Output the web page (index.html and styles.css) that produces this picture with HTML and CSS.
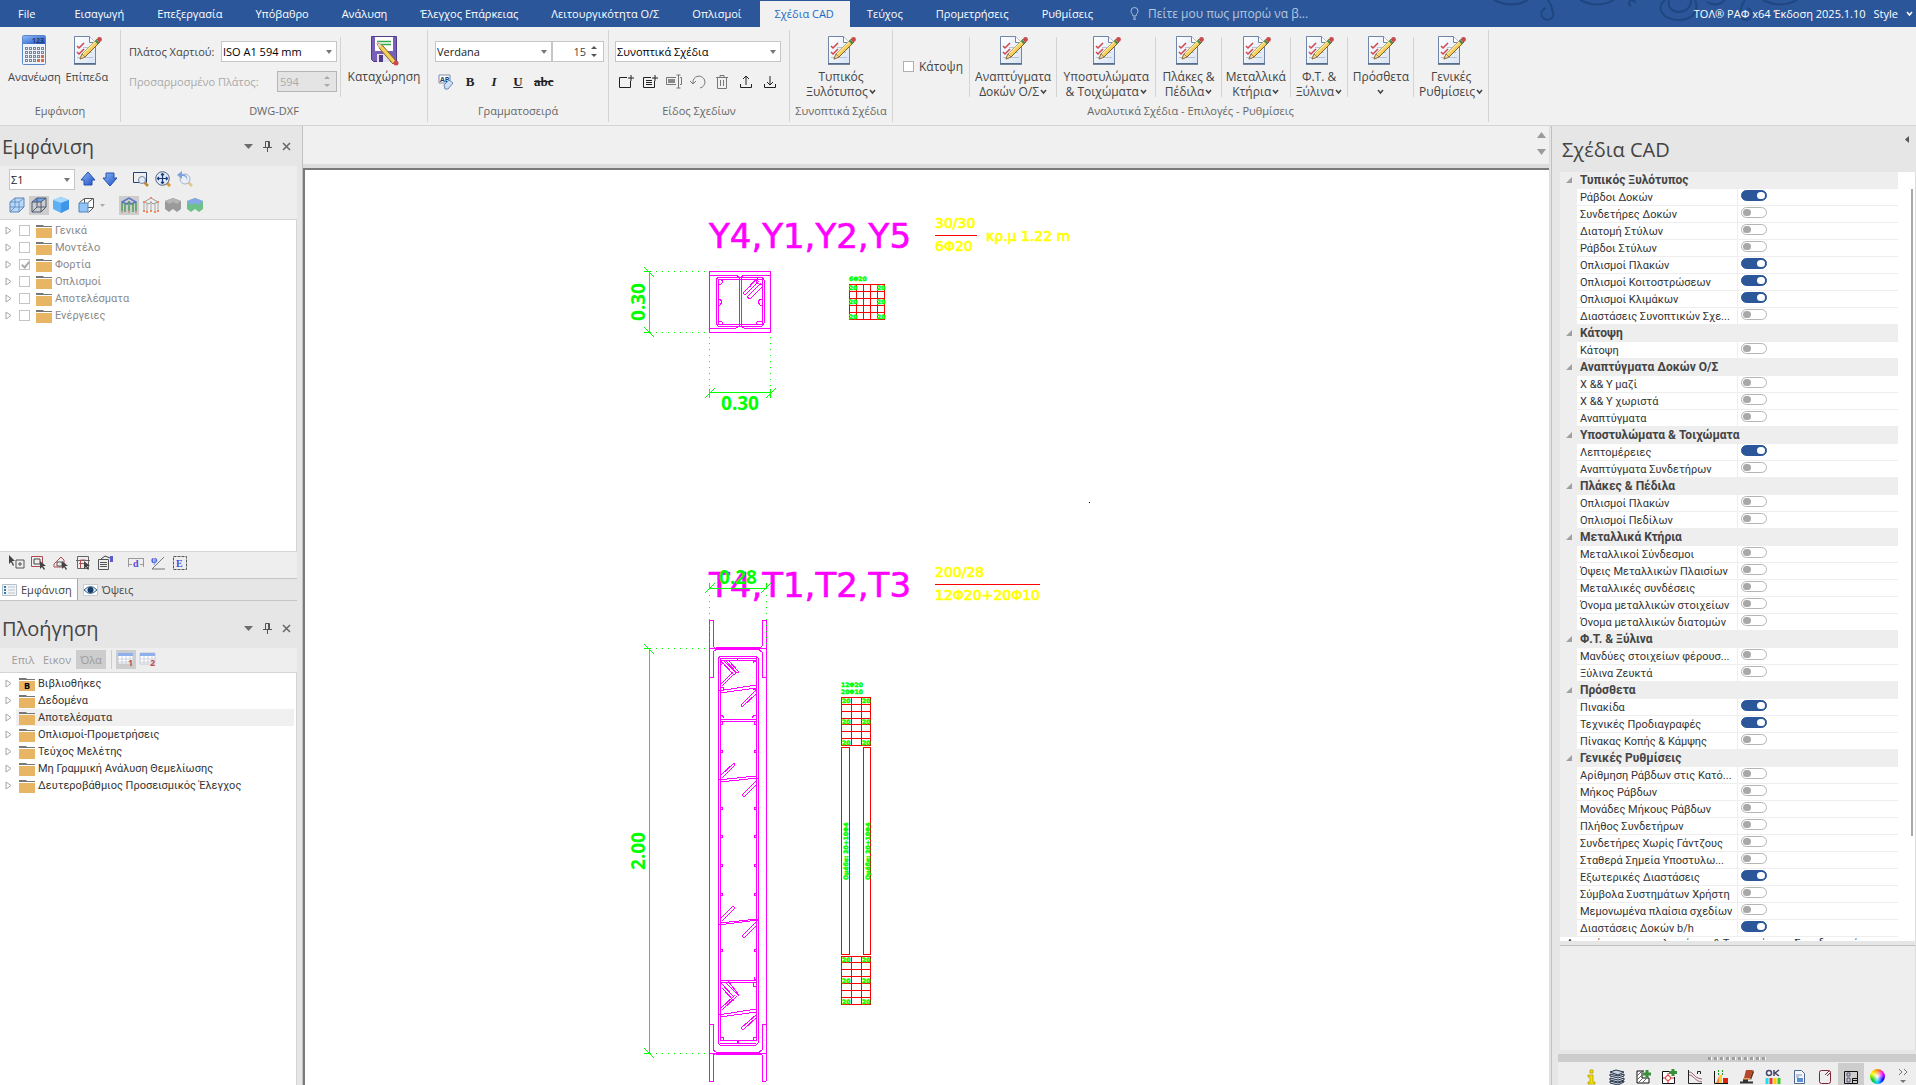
FILE: index.html
```html
<!DOCTYPE html>
<html lang="el">
<head>
<meta charset="utf-8">
<title>Σχέδια CAD</title>
<link rel="stylesheet" href="styles.css">
</head>
<body>
<svg class="defs" aria-hidden="true">
  <defs>
    <linearGradient id="paper" x1="0" y1="0" x2="1" y2="1"><stop offset="0" stop-color="#fff"/><stop offset="1" stop-color="#d9e4f5"/></linearGradient>
    <linearGradient id="blue" x1="0" y1="0" x2="1" y2="1"><stop offset="0" stop-color="#8db9f8"/><stop offset="1" stop-color="#1c4fc4"/></linearGradient>
    <symbol id="i-doc" viewBox="0 0 32 32">
      <path d="M3.500 2.500h15l6 6v21h-21z" fill="url(#paper)" stroke="#6f86a8"/>
      <path d="M3 30h22" stroke="#4d6482" stroke-width="1.500"/>
      <path d="M18.500 2.500v6h6" fill="#fff" stroke="#6f86a8"/>
      <path d="M12 13.500h9M12 18.500h9M6 23.500h16" stroke="#b9c3d2"/>
      <path d="M6 12l2 2 5-5M6 18l2 2 5-5" fill="none" stroke="#d0454b" stroke-width="1.500"/>
      <path d="M9 25l2-5L26 5l3 3-15 15z" fill="#f4cd5b" stroke="#7d6325"/>
      <path d="M12 20L26 6" stroke="#fbe9a6" stroke-width="1.500"/>
      <path d="M9 25l2-5 3 3z" fill="#f6d5ae" stroke="#7d6325" stroke-width=".6"/>
      <path d="M24.500 6.500l3 3" stroke="#3b8a5a" stroke-width="2"/>
      <circle cx="28.500" cy="5.500" r="2.400" fill="#c9494d"/>
    </symbol>
    <symbol id="i-calc" viewBox="0 0 32 32">
      <rect x="4.500" y="1.500" width="23" height="29" rx="1" fill="#eef3fb" stroke="#5c86c8"/>
      <rect x="5" y="2" width="22" height="8" fill="url(#blue)"/>
      <text x="14" y="9" class="calc-digits">123</text>
      <path d="M7 14.500h19M7 18.500h19M7 22.500h19M7 26.500h12" stroke="#7d8796" stroke-width="3" stroke-dasharray="3 1"/>
      <path d="M8 14.500h17M8 18.500h17M8 22.500h17M8 26.500h10" stroke="#e4e9f2" stroke-width="1" stroke-dasharray="1 3"/>
      <path d="M23 22.500h3M19 26.500h7" stroke="#d86c42" stroke-width="3" stroke-dasharray="3 1"/>
    </symbol>
    <symbol id="i-save" viewBox="0 0 32 32">
      <path d="M3.500 2.500h25v25h-23l-2-2z" fill="#7a5fb8" stroke="#513c8c"/>
      <rect x="7" y="3" width="18" height="14" fill="#fff"/>
      <path d="M9 7.500h14M9 10.500h14" stroke="#33a84a" stroke-width="1.500"/>
      <rect x="9" y="20" width="13" height="8" fill="#e4e2ee"/><rect x="11" y="21" width="4" height="7" fill="#513c8c"/>
      <path d="M9 9l6 3 13 15-3 3-13-15z" fill="#f4cd5b" stroke="#7d6325"/>
      <path d="M9 9l5 2-3 3z" fill="#f6d5ae"/>
      <circle cx="28" cy="29" r="2.500" fill="#c9494d"/>
    </symbol>
    <symbol id="i-chev" viewBox="0 0 7 6"><path d="M1 1l2.500 3L6 1" fill="none" stroke="currentColor" stroke-width="1.500"/></symbol>
    <symbol id="i-folder" viewBox="0 0 17 14"><path d="M0 1h7l1 1h8v1H0z" fill="#777"/><path d="M0 4h16v10H0z" fill="#e8b565"/></symbol>
    <symbol id="i-exp" viewBox="0 0 7 9"><path d="M1 1l5 3.500L1 8z" fill="#fff" stroke="#a6a6a6"/></symbol>
    <symbol id="i-tri" viewBox="0 0 9 5"><path d="M0 0h9L4.500 5z" fill="#6d6d6d"/></symbol>
    <symbol id="i-pin" viewBox="0 0 9 11"><path d="M2.500 6V.5h4V6M0 6.500h9M4.500 7v4M5.500 1v5" fill="none" stroke="#555"/></symbol>
    <symbol id="i-close" viewBox="0 0 9 9"><path d="M1 1l7 7M8 1L1 8" stroke="#666" stroke-width="1.500"/></symbol>
    <symbol id="i-up" viewBox="0 0 16 16"><path d="M8 1l7 8h-3v5H4V9H1z" fill="url(#blue)" stroke="#2450b0"/></symbol>
    <symbol id="i-down" viewBox="0 0 16 16"><path d="M8 15L1 7h3V2h8v5h3z" fill="url(#blue)" stroke="#2450b0"/></symbol>
    <symbol id="i-zoomwin" viewBox="0 0 16 16"><path d="M.5 1.500h13v10H.5z" fill="none" stroke="#25416f"/><path d="M11 11l4 4" stroke="#c58a2c" stroke-width="2.500"/><circle cx="9" cy="9" r="3.500" fill="#e2ecf8" stroke="#75879f"/></symbol>
    <symbol id="i-zoomall" viewBox="0 0 16 16"><path d="M12 12l3 3" stroke="#e09a2c" stroke-width="3"/><circle cx="7.500" cy="7.500" r="6.800" fill="#dce8f8" stroke="#56637a"/><path d="M7.500 2.500v10M2.500 7.500h10M6 4l1.500-1.500L9 4M6 11l1.500 1.500L9 11M4 6L2.500 7.500 4 9M11 6l1.500 1.500L11 9" fill="none" stroke="#1d3a78" stroke-width="1.200"/></symbol>
    <symbol id="i-zoomprev" viewBox="0 0 16 16"><path d="M11 11l4 4" stroke="#e6c48c" stroke-width="2.500"/><circle cx="8" cy="8" r="5" fill="#e8eff8" stroke="#a7b4c6"/><path d="M10 10c0-4-2-5-5-5v3L0 4l5-4v3c4 0 6 3 5 7z" fill="#7fa2dc"/></symbol>
    <symbol id="i-cube" viewBox="0 0 16 16"><path d="M1 5l5-4h9v9l-5 5H1z" fill="#b8d8fa" stroke="#5c85b8"/><path d="M1 5h9v10M10 5l5-4M6 1v9H1M6 10l-5 5M6 10h9" fill="none" stroke="#5c85b8" stroke-width=".8"/></symbol>
    <symbol id="i-cubewire" viewBox="0 0 16 16"><path d="M1 5l5-4h9l-5 4z" fill="#6f9fe8"/><path d="M1 5l5-4h9v9l-5 5H1zM1 5h9v10M10 5l5-4M6 1v9M6 10l-5 5M6 10h9" fill="none" stroke="#4c5a70"/></symbol>
    <symbol id="i-cubesolid" viewBox="0 0 16 16"><path d="M0 3l8-3 8 3v9l-8 4-8-4z" fill="#5db0f5"/><path d="M0 3l8-3 8 3-8 3z" fill="#a4d8ff"/><path d="M8 6l8-3v9l-8 4z" fill="#3f96e8"/></symbol>
    <symbol id="i-cubefront" viewBox="0 0 16 16"><path d="M1.500 5.500l5-4h9v9l-5 5" fill="#fff" stroke="#555"/><path d="M10 5.500l5-4M6.500 2v4M10 10.500h5" stroke="#555"/><path d="M1 6h9v9H1z" fill="#93c4f5" stroke="#4f84bf"/></symbol>
    <symbol id="i-frame" viewBox="0 0 16 16"><path d="M1 5l7-4 7 4-5 2-2-2-2 2z" fill="none" stroke="#5d74c4" stroke-width="1.500"/><path d="M1 6v8M4 6v9M8 4v10M12 6v9M15 6v8" stroke="#4f9e5c" stroke-width="1.500"/><path d="M0 15h2M7 15h2M14 15h2" stroke="#d8745c"/></symbol>
    <symbol id="i-frame2" viewBox="0 0 16 16"><path d="M1 5l7-4 7 4-5 2-2-2-2 2z" fill="none" stroke="#999"/><path d="M1 6v8M4 6v9M8 4v10M12 6v9M15 6v8" stroke="#a8a8a8"/><path d="M0 14h2M3 15h2M7 14h2M11 15h2M14 14h2M0 5h2M14 5h2M7 1h2" stroke="#f08a60" stroke-width="2"/></symbol>
    <symbol id="i-solid" viewBox="0 0 16 16"><path d="M0 4l8-3 8 3v8l-4 3-4-3-4 3-4-3z" fill="#9a9a9a"/><path d="M0 4l8-3 8 3-4 3-4-2-4 2z" fill="#b4b4b4"/></symbol>
    <symbol id="i-solid2" viewBox="0 0 16 16"><path d="M0 4l8-3 8 3v8l-4 3-4-3-4 3-4-3z" fill="#6cc088"/><path d="M0 4l8-3 8 3-4 4-4-2-4 2z" fill="#86a8ea"/></symbol>
    <symbol id="i-table" viewBox="0 0 18 16"><path d="M1 1h15v11H1z" fill="#fff" stroke="#c5c9d4"/><path d="M1 1h15v3H1z" fill="#8fb0ec"/><path d="M1 7h15M1 10h15M5 4v8M9 4v8M13 4v8" stroke="#cdd2e0"/></symbol>
  </defs>
</svg>

<div class="app">
<header class="topbar">
  <nav class="tabs">
    <a href="#" class="file">File</a><a href="#">Εισαγωγή</a><a href="#">Επεξεργασία</a><a href="#">Υπόβαθρο</a><a href="#">Ανάλυση</a><a href="#">Έλεγχος Επάρκειας</a><a href="#">Λειτουργικότητα Ο/Σ</a><a href="#">Οπλισμοί</a><a href="#" class="active" aria-current="page">Σχέδια CAD</a><a href="#">Τεύχος</a><a href="#">Προμετρήσεις</a><a href="#">Ρυθμίσεις</a>
  </nav>
  <label class="tellme"><svg width="9" height="13" viewBox="0 0 9 13"><path d="M3 9C3 7 1 6.500 1 4a3.500 3.500 0 0 1 7 0c0 2.500-2 3-2 5zM3 11h3M3.500 12.500h2" fill="none" stroke="#aebfdc"/></svg><input type="text" placeholder="Πείτε μου πως μπορώ να β..." aria-label="Αναζήτηση"></label>
  <svg class="swirls" width="320" height="27" viewBox="1480 0 320 27" fill="none" stroke="#1f4680" stroke-width="2">
    <path d="M1491 0q18 9 34 0M1545 0q4 6 4 10a6 6 0 1 1-6-2M1577 0q18 9 34 0M1628 6a3 3 0 1 1 4-3M1662 0c-10 8-2 20 14 20s20-12 16-20M1666 0c-2 8 4 12 10 12s12-4 12-12M1742 0q-4 6-4 10a6 6 0 1 0 6-2M1760 0q18 9 34 0M1722 0q-8 8-18 2"/>
  </svg>
  <span class="version">ΤΟΛ® ΡΑΦ x64 Έκδοση 2025.1.10</span>
  <button class="style-btn">Style <svg width="7" height="6"><use href="#i-chev"/></svg></button>
</header>

<section class="ribbon">
  <div class="group g-view">
    <div class="tools">
      <button class="big"><svg><use href="#i-calc"/></svg>Ανανέωση</button>
      <button class="big"><svg><use href="#i-doc"/></svg>Επίπεδα</button>
    </div>
    <h2>Εμφάνιση</h2>
  </div>
  <div class="group g-dxf">
    <div class="tools">
      <div class="stack paper">
        <div class="line"><label for="paper-w">Πλάτος Χαρτιού:</label><span class="combo"><select id="paper-w"><option>ISO A1 594 mm</option></select></span></div>
        <div class="line off"><label for="fit-w">Προσαρμοσμένο Πλάτος:</label><span class="spin"><input id="fit-w" type="text" value="594" disabled></span></div>
      </div>
      <i class="sep"></i>
      <button class="big"><svg><use href="#i-save"/></svg>Καταχώρηση</button>
    </div>
    <h2>DWG-DXF</h2>
  </div>
  <div class="group g-font">
    <div class="tools">
      <div class="stack">
        <div class="line joined"><span class="combo"><select aria-label="Γραμματοσειρά"><option>Verdana</option></select></span><span class="spin num"><input type="text" value="15" aria-label="Μέγεθος"></span></div>
        <div class="line fmt">
          <button aria-label="Καθαρισμός"><svg width="16" height="16" viewBox="0 0 16 16"><path d="M1 1h11v8H1z" fill="#fff" stroke="#7d8ba5"/><text x="2" y="8" class="clear-text">AB</text><path d="M6 11l5-5 4 3-5 6H7z" fill="#cfe0f6" stroke="#6d87b4"/></svg></button>
          <button class="b">B</button><button class="i">I</button><button class="u">U</button><button class="s">abc</button>
        </div>
      </div>
    </div>
    <h2>Γραμματοσειρά</h2>
  </div>
  <div class="group g-kind">
    <div class="tools">
      <div class="stack">
        <div class="line"><span class="combo"><select aria-label="Είδος Σχεδίων"><option>Συνοπτικά Σχέδια</option></select></span></div>
        <div class="line kinds">
          <button aria-label="Νέο"><svg width="16" height="16" viewBox="0 0 16 16"><path d="M9 3.500H1.500v10h11V7M13 1v6M10 4h6" fill="none" stroke="#222"/></svg></button>
          <button aria-label="Αντιγραφή"><svg width="16" height="16" viewBox="0 0 16 16"><path d="M9 3.500H1.500v10h11V7M13 1v6M10 4h6M4 6.500h6M4 8.500h6M4 10.500h6" fill="none" stroke="#222"/></svg></button>
          <button aria-label="Μετονομασία"><svg width="16" height="16" viewBox="0 0 16 16"><path d="M10 3.500H.5v7H10M12.500 1v13M10.500 1h4M10.500 14h4M14 3.500h1.500v7H14" fill="none" stroke="#777"/><path d="M2 5h7v4H2z" fill="#888"/></svg></button>
          <button aria-label="Αναίρεση"><svg width="16" height="16" viewBox="0 0 16 16"><path d="M3 9a6 6 0 1 1 7 5M0 7l3 3 3-3" fill="none" stroke="#777"/></svg></button>
          <button aria-label="Διαγραφή"><svg width="16" height="16" viewBox="0 0 16 16"><path d="M2 3.500h12M6 3V1.500h4V3M3.500 4v10.500h9V4M6.500 6v6M9.500 6v6" fill="none" stroke="#777"/></svg></button>
          <button aria-label="Εξαγωγή"><svg width="16" height="16" viewBox="0 0 16 16"><path d="M2.500 10v3.500h11V10M8 11V2M5 5l3-3 3 3" fill="none" stroke="#222"/></svg></button>
          <button aria-label="Εισαγωγή"><svg width="16" height="16" viewBox="0 0 16 16"><path d="M2.500 10v3.500h11V10M8 2v9M5 8l3 3 3-3" fill="none" stroke="#222"/></svg></button>
        </div>
      </div>
    </div>
    <h2>Είδος Σχεδίων</h2>
  </div>
  <div class="group g-typ">
    <div class="tools"><button class="big"><svg><use href="#i-doc"/></svg>Τυπικός<span>Ξυλότυπος<svg class="chev"><use href="#i-chev"/></svg></span></button></div>
    <h2>Συνοπτικά Σχέδια</h2>
  </div>
  <div class="group g-ana">
    <div class="tools">
      <label class="plan"><input type="checkbox">Κάτοψη</label>
      <i class="sep"></i><button class="big w1"><svg><use href="#i-doc"/></svg>Αναπτύγματα<span>Δοκών Ο/Σ <svg class="chev"><use href="#i-chev"/></svg></span></button>
      <i class="sep"></i><button class="big w2"><svg><use href="#i-doc"/></svg>Υποστυλώματα<span>&amp; Τοιχώματα<svg class="chev"><use href="#i-chev"/></svg></span></button>
      <i class="sep"></i><button class="big w3"><svg><use href="#i-doc"/></svg>Πλάκες &amp;<span>Πέδιλα<svg class="chev"><use href="#i-chev"/></svg></span></button>
      <i class="sep"></i><button class="big w6"><svg><use href="#i-doc"/></svg>Μεταλλικά<span>Κτήρια<svg class="chev"><use href="#i-chev"/></svg></span></button>
      <i class="sep"></i><button class="big w4"><svg><use href="#i-doc"/></svg>Φ.Τ. &amp;<span>Ξύλινα<svg class="chev"><use href="#i-chev"/></svg></span></button>
      <i class="sep"></i><button class="big w3"><svg><use href="#i-doc"/></svg>Πρόσθετα<span><svg class="chev"><use href="#i-chev"/></svg></span></button>
      <i class="sep"></i><button class="big w5"><svg><use href="#i-doc"/></svg>Γενικές<span>Ρυθμίσεις<svg class="chev"><use href="#i-chev"/></svg></span></button>
    </div>
    <h2>Αναλυτικά Σχέδια - Επιλογές - Ρυθμίσεις</h2>
  </div>
</section>

<div class="work">
<aside class="left">
  <section class="pane view-pane">
    <header class="pane-head"><h1>Εμφάνιση</h1><button aria-label="Μενού"><svg width="9" height="5"><use href="#i-tri"/></svg></button><button aria-label="Καρφίτσωμα"><svg width="9" height="11"><use href="#i-pin"/></svg></button><button aria-label="Κλείσιμο"><svg width="9" height="9"><use href="#i-close"/></svg></button></header>
    <div class="bars">
      <div class="bar">
        <span class="combo level"><select aria-label="Στάθμη"><option>Σ1</option></select></span>
        <button aria-label="Πάνω"><svg><use href="#i-up"/></svg></button><button aria-label="Κάτω"><svg><use href="#i-down"/></svg></button><i class="gap"></i><button aria-label="Εστίαση παραθύρου"><svg><use href="#i-zoomwin"/></svg></button><button aria-label="Εστίαση όλων"><svg><use href="#i-zoomall"/></svg></button><button aria-label="Προηγούμενη εστίαση"><svg><use href="#i-zoomprev"/></svg></button>
      </div>
      <div class="bar">
        <button aria-label="Κύβος"><svg><use href="#i-cube"/></svg></button><button class="on" aria-label="Πλέγμα"><svg><use href="#i-cubewire"/></svg></button><button aria-label="Στερεό"><svg><use href="#i-cubesolid"/></svg></button><i class="gap s"></i><button aria-label="Όψη"><svg><use href="#i-cubefront"/></svg></button><button class="drop" aria-label="Περισσότερα"><svg class="mini"><use href="#i-tri"/></svg></button><i class="gap m"></i><button class="on" aria-label="Φορέας"><svg><use href="#i-frame"/></svg></button><button aria-label="Κόμβοι"><svg><use href="#i-frame2"/></svg></button><button aria-label="Γκρι"><svg><use href="#i-solid"/></svg></button><button aria-label="Χρώμα"><svg><use href="#i-solid2"/></svg></button>
      </div>
    </div>
    <ul class="tree checks">
      <li><svg class="exp"><use href="#i-exp"/></svg><label><input type="checkbox"><svg class="fold"><use href="#i-folder"/></svg>Γενικά</label></li>
      <li><svg class="exp"><use href="#i-exp"/></svg><label><input type="checkbox"><svg class="fold"><use href="#i-folder"/></svg>Μοντέλο</label></li>
      <li><svg class="exp"><use href="#i-exp"/></svg><label><input type="checkbox" checked><svg class="fold"><use href="#i-folder"/></svg>Φορτία</label></li>
      <li><svg class="exp"><use href="#i-exp"/></svg><label><input type="checkbox"><svg class="fold"><use href="#i-folder"/></svg>Οπλισμοί</label></li>
      <li><svg class="exp"><use href="#i-exp"/></svg><label><input type="checkbox"><svg class="fold"><use href="#i-folder"/></svg>Αποτελέσματα</label></li>
      <li><svg class="exp"><use href="#i-exp"/></svg><label><input type="checkbox"><svg class="fold"><use href="#i-folder"/></svg>Ενέργειες</label></li>
    </ul>
    <div class="bar foot">
      <button aria-label="Επιλογή"><svg viewBox="0 0 16 16"><path d="M0 0v9l2-2 2 4 1-1-2-4h3z" fill="#444"/><path d="M7 5h8v8H7zM11 7v4M9 9h4" fill="none" stroke="#555"/></svg></button>
      <button aria-label="Παράθυρο"><svg viewBox="0 0 16 16"><path d="M.5 1.500h11v10H.5z" fill="none" stroke="#b04a50"/><path d="M3 4h6v5H3z" fill="none" stroke="#444"/><path d="M9 6v8l2-2 2 3 1-1-2-3h3z" fill="#444"/></svg></button>
      <button aria-label="Πολύγωνο"><svg viewBox="0 0 16 16"><path d="M1 12V9l7-7 3 3v7z" fill="none" stroke="#b04a50"/><path d="M4 7h5v4H4z" fill="none" stroke="#555"/><path d="M9 6v8l2-2 2 3 1-1-2-3h3z" fill="#444"/></svg></button>
      <button aria-label="Τομή"><svg viewBox="0 0 16 16"><path d="M2.500 1.500h11v12h-11zM1 5.500h14" fill="none" stroke="#666"/><path d="M5.500 13V5h5M4 8.500h5" fill="none" stroke="#b04a50"/><path d="M9 6v8l2-2 2 3 1-1-2-3h3z" fill="#444"/></svg></button>
      <button aria-label="Ιδιότητες"><svg viewBox="0 0 16 16"><path d="M1.500 4.500h10v10h-10zM3 7.500h7M3 9.500h7M3 11.500h7" fill="none" stroke="#555"/><path d="M4 4l4-3 5 2" fill="none" stroke="#444"/><path d="M13 1h3v6h-3z" fill="#5c5cc8"/></svg></button>
      <i class="gap"></i>
      <button aria-label="Απόσταση"><svg viewBox="0 0 16 16"><path d="M.5 3v9M15.500 3v9M1 3.500h14M1 9.500h3M12 9.500h3" stroke="#999"/><text x="5" y="12" class="ico-t">d</text></svg></button>
      <button aria-label="Γωνία"><svg viewBox="0 0 16 16"><path d="M2 14L14 2M2 14h13" stroke="#777"/><text x="1" y="8" class="ico-t">φ</text></svg></button>
      <button aria-label="Εμβαδόν"><svg viewBox="0 0 16 16"><path d="M1.500 1.500h13v13h-13z" fill="none" stroke="#555" stroke-dasharray="3 1"/><text x="4" y="12" class="ico-t">E</text></svg></button>
    </div>
    <div class="pane-tabs" role="tablist">
      <button role="tab" aria-selected="true" class="sel"><svg width="15" height="12" viewBox="0 0 15 12"><path d="M.5.5h14v11H.5z" fill="#f3f6f9" stroke="#b7bfc8"/><path d="M2 3h2M2 6h2M2 9h2" stroke="#2f7bb0" stroke-width="2"/><path d="M6 3h7M6 6h7M6 9h7" stroke="#b9c2cb"/></svg>Εμφάνιση</button>
      <button role="tab" aria-selected="false"><svg width="15" height="12" viewBox="0 0 15 12"><path d="M.5.5h14v11H.5z" fill="#fff" stroke="#c6ccd3"/><path d="M1 6q6.500-7 13 0-6.500 7-13 0z" fill="#dceaf6" stroke="#3a5d7d"/><circle cx="7.500" cy="6" r="3" fill="#123c6b"/></svg>Όψεις</button>
    </div>
  </section>
  <section class="pane nav-pane">
    <header class="pane-head"><h1>Πλοήγηση</h1><button aria-label="Μενού"><svg width="9" height="5"><use href="#i-tri"/></svg></button><button aria-label="Καρφίτσωμα"><svg width="9" height="11"><use href="#i-pin"/></svg></button><button aria-label="Κλείσιμο"><svg width="9" height="9"><use href="#i-close"/></svg></button></header>
    <div class="bar nav-bar"><button>Επιλ</button><button>Εικον</button><button class="on">Όλα</button><i class="vsep"></i><button class="on tbl" aria-label="Πίνακας 1"><svg viewBox="0 0 18 16"><use href="#i-table"/><text x="11" y="14" class="num-t">1</text></svg></button><button class="tbl" aria-label="Πίνακας 2"><svg viewBox="0 0 18 16"><use href="#i-table"/><text x="11" y="14" class="num-t">2</text></svg></button></div>
    <ul class="tree">
      <li><svg class="exp"><use href="#i-exp"/></svg><a href="#"><svg class="fold" viewBox="0 0 17 14"><use href="#i-folder" width="17" height="14"/><text x="5" y="12" class="b-t">B</text></svg>Βιβλιοθήκες</a></li>
      <li><svg class="exp"><use href="#i-exp"/></svg><a href="#"><svg class="fold"><use href="#i-folder"/></svg>Δεδομένα</a></li>
      <li><svg class="exp"><use href="#i-exp"/></svg><a href="#" class="cur"><svg class="fold"><use href="#i-folder"/></svg>Αποτελέσματα</a></li>
      <li><svg class="exp"><use href="#i-exp"/></svg><a href="#"><svg class="fold"><use href="#i-folder"/></svg>Οπλισμοί-Προμετρήσεις</a></li>
      <li><svg class="exp"><use href="#i-exp"/></svg><a href="#"><svg class="fold"><use href="#i-folder"/></svg>Τεύχος Μελέτης</a></li>
      <li><svg class="exp"><use href="#i-exp"/></svg><a href="#"><svg class="fold"><use href="#i-folder"/></svg>Μη Γραμμική Ανάλυση Θεμελίωσης</a></li>
      <li><svg class="exp"><use href="#i-exp"/></svg><a href="#"><svg class="fold"><use href="#i-folder"/></svg>Δευτεροβάθμιος Προσεισμικός Έλεγχος</a></li>
    </ul>
  </section>
</aside>

<main class="canvas">
  <div class="strip"><button aria-label="Πάνω"><svg width="9" height="6" viewBox="0 0 9 6"><path d="M0 6h9L4.500 0z" fill="#9a9a9a"/></svg></button><button aria-label="Κάτω"><svg width="9" height="6" viewBox="0 0 9 6"><path d="M0 0h9L4.500 6z" fill="#9a9a9a"/></svg></button></div>
  <div class="sheet">
  <svg class="drawing" width="800" height="916" viewBox="305 170 800 916">
    <g class="mag">
      <path d="M709 271h61v61h-61zM709 275h27l3 2h2l3-2h26M709 328h27l3-2h2l3 2h26M739 277v49M741 277v49M718 277h44l2 3v43l-2 3h-44l-2-3v-43zM718 279h44v45h-44z"/>
      <path d="M718 279h3l2 3-2 2h-3M762 279h-4l-2 3 3 2h3M718 299h2l2 3-2 3h-2M762 299h-2l-2 3 2 3h2M718 321h3l2 2-1 2M762 321h-4l-2 2 1 2"/>
      <path d="M743 293l14-14M745 295l14-14M743 293l2 2M747 297l14-14M750 299l13-13M747 297l3 2M750 287v-2l8-7"/>
      <path d="M709 620v461M766 620v461M709 620h4v26l3 3M766 620h-4v26l-3 3M709 648h57M709 677h4v-25l4-3M766 677h-4v-25l-4-3M716 647h44M716 649h44"/>
      <path d="M709 1024h4v26l3 2M766 1024h-4v26l-3 2M709 1053h57M709 1081h4v-26l4-2M766 1081h-4v-26l-4-2M716 1052h44M716 1054h44"/>
      <path d="M718 658v385l2 2h36l2-2V658M720 658v383M756 658v383M718 658l3-2h34l3 2M720 658h36M720 660h36M720 1040h36M720 1043h36"/>
      <path d="M720 719h36M720 721h36M718 691l38-6M720 693l36-5M718 780l38-4M720 782l38-4M718 925l40-5M720 923l38-4M720 980h36M720 982h36M718 1015l38-6M720 1017l36-5"/>
      <path d="M721 661l13 14M723 660l13 13M734 675l2-2M725 660l12 13M728 660l11 12M737 673l2-1M720 685l13-13M722 686l12-12M756 690l-15 15M757 693l-15 14M741 705l1 2"/>
      <path d="M720 776l14-13M722 778l13-13M734 763l1 2M757 780l-15 15M757 784l-13 13M742 795l2 2"/>
      <path d="M720 919l13-13M722 921l13-13M733 906l2 2M756 922l-14 14M757 925l-13 13M742 936l2 2"/>
      <path d="M721 983l13 14M722 988l12 13M726 983l13 13M728 981l11 14M720 1009l15-14M722 1010l15-14M756 1015l-15 13M757 1017l-14 13M741 1028l2 2"/>
      <path d="M720 661l3 2-2 2M756 661h-3l1 2M720 687h3l1 3M756 689h-3M720 715h2l2 3M756 715h-2l-2 3M720 724h2v-2M756 724h-2v-2M756 979h-2v-2M753 983v3h3M720 1037h3v4M756 1037h-3v4M737 658v2M737 1040v3M738 1040v3"/>
      <path d="M720 750h2v2h-2M756 750h-2v2h2M720 807h2v2h-2M756 807h-2v2h2M720 835h2v2h-2M756 835h-2v2h2M720 864h2v2h-2M756 864h-2v2h2M720 893h2v2h-2M756 893h-2v2h2M720 949h2v2h-2M756 949h-2v2h2"/>
    </g>
    <g class="red">
      <path d="M935 235h42M935 584h105M849 284h35v35h-35zM849 291h35M849 298h35M849 305h35M849 312h35M856 284v35M863 284v35M870 284v35M877 284v35"/>
      <path d="M841 697h29v48h-29zM841 704h29M841 711h29M841 718h29M841 724h29M841 731h29M841 738h29M851 697v48M861 697v48M841 747h8v207h-8zM863 747h7v207h-7zM841 956h29v48h-29zM841 962h29M841 969h29M841 976h29M841 983h29M841 990h29M841 997h29M851 956v48M861 956v48"/>
    </g>
    <text x="709" y="248" class="big-t">Y4,Y1,Y2,Y5</text>
    <text x="709" y="597" class="big-t">T4,T1,T2,T3</text>
    <g class="green">
      <path d="M649 271v61M644 271h7M644 332h7M644 267l10 10M644 327l10 10M709 392h61M709 389v9M770 389v9M705 398l10-10M766 398l10-10"/>
      <path d="M709 588h57M709 583v6M766 583v6M705 593l10-10M761 593l10-10M649 648v405M644 648h7M644 1053h7M644 644l10 10M644 1048l10 10"/>
      <path class="dots" d="M656 271h53M656 332h53M709 337v50M770 337v50M709 595v53M766 595v53M656 648h53M656 1053h53"/>
    </g>
    <g class="dim-t">
      <text x="740" y="410">0.30</text><text x="738" y="584">0.28</text>
      <text transform="translate(645 302) rotate(-90)">0.30</text><text transform="translate(645 851) rotate(-90)">2.00</text>
    </g>
    <g class="yel-t"><text x="935" y="228">30/30</text><text x="935" y="251">6Φ20</text><text x="986" y="241">κρ.μ 1.22 m</text><text x="935" y="577">200/28</text><text x="935" y="600">12Φ20+20Φ10</text></g>
    <g class="tiny-t">
      <text x="849" y="281">6Φ20</text><text x="841" y="687">12Φ20</text><text x="841" y="694">20Φ10</text>
      <text x="849" y="290">20</text><text x="877" y="290">20</text><text x="849" y="304">20</text><text x="877" y="304">20</text><text x="849" y="319">20</text><text x="877" y="319">20</text>
      <text x="842" y="703">20</text><text x="862" y="703">20</text><text x="842" y="724">20</text><text x="862" y="724">20</text><text x="842" y="745">20</text><text x="862" y="745">20</text>
      <text x="842" y="962">20</text><text x="862" y="962">20</text><text x="842" y="983">20</text><text x="862" y="983">20</text><text x="842" y="1004">20</text><text x="862" y="1004">20</text>
      <text transform="translate(848 880) rotate(-90)">Ομάδα: 20+10Φ4</text><text transform="translate(870 880) rotate(-90)">Ομάδα: 20+10Φ4</text>
    </g>
    <rect x="1089" y="502" width="1" height="1"/>
  </svg>
  </div>
</main>

<aside class="right">
  <header class="r-head"><h1>Σχέδια CAD</h1><button aria-label="Σύμπτυξη"><svg width="4" height="7" viewBox="0 0 4 7"><path d="M4 0v7L0 3.500z" fill="#555"/></svg></button></header>
  <div class="grid-wrap">
    <div class="props">
      <h3>Τυπικός Ξυλότυπος</h3>
      <label><span>Ράβδοι Δοκών</span><input type="checkbox" role="switch" checked></label>
      <label><span>Συνδετήρες Δοκών</span><input type="checkbox" role="switch"></label>
      <label><span>Διατομή Στύλων</span><input type="checkbox" role="switch"></label>
      <label><span>Ράβδοι Στύλων</span><input type="checkbox" role="switch"></label>
      <label><span>Οπλισμοί Πλακών</span><input type="checkbox" role="switch" checked></label>
      <label><span>Οπλισμοί Κοιτοστρώσεων</span><input type="checkbox" role="switch" checked></label>
      <label><span>Οπλισμοί Κλιμάκων</span><input type="checkbox" role="switch" checked></label>
      <label><span>Διαστάσεις Συνοπτικών Σχε...</span><input type="checkbox" role="switch"></label>
      <h3>Κάτοψη</h3>
      <label><span>Κάτοψη</span><input type="checkbox" role="switch"></label>
      <h3>Αναπτύγματα Δοκών Ο/Σ</h3>
      <label><span>Χ &amp;&amp; Υ μαζί</span><input type="checkbox" role="switch"></label>
      <label><span>Χ &amp;&amp; Υ χωριστά</span><input type="checkbox" role="switch"></label>
      <label><span>Αναπτύγματα</span><input type="checkbox" role="switch"></label>
      <h3>Υποστυλώματα &amp; Τοιχώματα</h3>
      <label><span>Λεπτομέρειες</span><input type="checkbox" role="switch" checked></label>
      <label><span>Αναπτύγματα Συνδετήρων</span><input type="checkbox" role="switch"></label>
      <h3>Πλάκες &amp; Πέδιλα</h3>
      <label><span>Οπλισμοί Πλακών</span><input type="checkbox" role="switch"></label>
      <label><span>Οπλισμοί Πεδίλων</span><input type="checkbox" role="switch"></label>
      <h3>Μεταλλικά Κτήρια</h3>
      <label><span>Μεταλλικοί Σύνδεσμοι</span><input type="checkbox" role="switch"></label>
      <label><span>Όψεις Μεταλλικών Πλαισίων</span><input type="checkbox" role="switch"></label>
      <label><span>Μεταλλικές συνδέσεις</span><input type="checkbox" role="switch"></label>
      <label><span>Όνομα μεταλλικών στοιχείων</span><input type="checkbox" role="switch"></label>
      <label><span>Όνομα μεταλλικών διατομών</span><input type="checkbox" role="switch"></label>
      <h3>Φ.Τ. &amp; Ξύλινα</h3>
      <label><span>Μανδύες στοιχείων φέρουσ...</span><input type="checkbox" role="switch"></label>
      <label><span>Ξύλινα Ζευκτά</span><input type="checkbox" role="switch"></label>
      <h3>Πρόσθετα</h3>
      <label><span>Πινακίδα</span><input type="checkbox" role="switch" checked></label>
      <label><span>Τεχνικές Προδιαγραφές</span><input type="checkbox" role="switch" checked></label>
      <label><span>Πίνακας Κοπής &amp; Κάμψης</span><input type="checkbox" role="switch"></label>
      <h3>Γενικές Ρυθμίσεις</h3>
      <label><span>Αρίθμηση Ράβδων στις Κατό...</span><input type="checkbox" role="switch"></label>
      <label><span>Μήκος Ράβδων</span><input type="checkbox" role="switch"></label>
      <label><span>Μονάδες Μήκους Ράβδων</span><input type="checkbox" role="switch"></label>
      <label><span>Πλήθος Συνδετήρων</span><input type="checkbox" role="switch"></label>
      <label><span>Συνδετήρες Χωρίς Γάντζους</span><input type="checkbox" role="switch"></label>
      <label><span>Σταθερά Σημεία Υποστυλω...</span><input type="checkbox" role="switch"></label>
      <label><span>Εξωτερικές Διαστάσεις</span><input type="checkbox" role="switch" checked></label>
      <label><span>Σύμβολα Συστημάτων Χρήστη</span><input type="checkbox" role="switch"></label>
      <label><span>Μεμονωμένα πλαίσια σχεδίων</span><input type="checkbox" role="switch"></label>
      <label><span>Διαστάσεις Δοκών b/h</span><input type="checkbox" role="switch" checked></label>
      <p>Διαστάσεις υποστυλωμάτων &amp; Τοιχωμάτων &nbsp; Στις διατομές</p>
    </div>
    <div class="scroll"><i></i></div>
  </div>
  <div class="info"></div>
  <div class="grip"><i></i></div>
  <div class="dock">
    <button aria-label="Πληροφορίες"><svg viewBox="0 0 16 16"><path d="M7 1h3v3H7zM5 6h5v7h2v2H5v-2h2V8H5z" fill="#f8e400" stroke="#a89400" stroke-width=".7"/></svg></button>
    <button aria-label="Επίπεδα"><svg viewBox="0 0 16 16"><path d="M1 3l6-2 8 2-6 3zM1 5l8 2 6-2v2l-6 2-8-2zM1 9l8 2 6-2v2l-6 2-8-2zM1 12l8 2 6-2v1l-6 3-8-2z" fill="#c9d1de" stroke="#26334a"/></svg></button>
    <button aria-label="Υλικό"><svg viewBox="0 0 16 16"><path d="M9 2H2v12h12V9H7V2" fill="#fff" stroke="#111"/><path d="M2 7l5-5M2 11l5-5M3 14l5-5M7 14l5-5" stroke="#666"/><path d="M12 1v8M8 5h8" stroke="#3a8f3a" stroke-width="3"/></svg></button>
    <button aria-label="Κόμβος"><svg viewBox="0 0 16 16"><path d="M9 2.500H1.500v12h12V8" fill="#fff" stroke="#111"/><circle cx="7" cy="9" r="2.500" fill="none" stroke="#d22"/><path d="M2 9h2M10 9h3M7 4v2M7 12v2" stroke="#d22"/><path d="M12 0v7M8 3.500h8" stroke="#3a8f3a" stroke-width="3"/></svg></button>
    <button aria-label="Διάγραμμα"><svg viewBox="0 0 16 16"><path d="M1.500 1v13.500H15M10.500 5V2.500h3V5" fill="none" stroke="#222"/><path d="M2 3c5 0 4 6 13 7M2 6c5 0 5 6 13 7" fill="none" stroke="#a05a7a"/></svg></button>
    <button aria-label="Φάσμα"><svg viewBox="0 0 16 16"><path d="M1.500 2v12.500H15" fill="none" stroke="#111"/><path d="M3 14l3-7v7z" fill="#e84"/><path d="M6 6h3v8H6z" fill="#fc3"/><path d="M10 9h5v5h-5z" fill="#d21"/><path d="M5.500 1v5M9.500 1v6" stroke="#292" stroke-dasharray="2 1"/></svg></button>
    <button aria-label="Χρώση"><svg viewBox="0 0 16 16"><path d="M7 1h7l-3 8H5z" fill="#b5482a"/><path d="M11 9l3-8 1 2-3 8z" fill="#6d2a16"/><path d="M4 9h7v2H4z" fill="#e2a35c"/><path d="M1 13.500h13M4 11.500h5" stroke="#333" stroke-width="2"/></svg></button>
    <button aria-label="ΟΚ"><svg viewBox="0 0 16 16"><circle cx="4" cy="4" r="2.500" fill="#fff" stroke="#446" stroke-width="1.500"/><path d="M9 1v6M14 1l-4 3 4 3" stroke="#446" stroke-width="1.500" fill="none"/><path d="M2 9v6" stroke="#2de" stroke-width="3"/><path d="M6 9v6" stroke="#e33" stroke-width="3"/><path d="M10 9v6" stroke="#fc0" stroke-width="3"/><path d="M14 9v6" stroke="#3c3" stroke-width="3"/></svg></button>
    <button aria-label="Έγγραφο"><svg viewBox="0 0 16 16"><path d="M3.500 1.500h7l3 3v10h-10z" fill="#f2f6fc" stroke="#51698c"/><path d="M5 6h6M5 8h3" stroke="#7d93b5"/><path d="M6 9h6v4H6z" fill="#5b8fd8"/></svg></button>
    <button aria-label="Συνδετήρας"><svg viewBox="0 0 16 16"><rect x="2.500" y="1.500" width="11" height="13" rx="2" fill="none" stroke="#7a2433"/><path d="M8 6l4-4M10 7l3-3" stroke="#7a2433"/></svg></button>
    <button class="on" aria-label="Σχέδιο"><svg viewBox="0 0 16 16"><path d="M1.500 2.500h13v12h-13z" fill="none" stroke="#111"/><path d="M4 4h3v3H4zM4 9h3v4H4z" fill="none" stroke="#557"/><path d="M9.500 14V9.500h5M9.500 11.500h5" fill="none" stroke="#111"/></svg></button>
    <button aria-label="Χρώματα"><i class="wheel"></i></button>
    <button aria-label="Περισσότερα"><svg viewBox="0 0 16 16"><path d="M4 0l3 3-3 3M9 0l3 3-3 3" fill="none" stroke="#777"/><path d="M5 11h6l-3 3z" fill="#777"/></svg></button>
  </div>
</aside>
</div>
</div>
</body>
</html>
```
FILE: styles.css
```css
* { box-sizing: border-box; }
html, body { height: 100%; margin: 0; }
body { font: 12px/15px "Open Sans", "Noto Sans", sans-serif; color: #444; background: #e6e6e6; overflow: hidden; }
button, input, select { font: inherit; color: inherit; }
button { border: 0; padding: 0; background: none; }
a { color: inherit; text-decoration: none; }
h1, h2, h3, p, ul { margin: 0; padding: 0; font-weight: 400; }
svg { display: block; flex: none; }
.defs { position: absolute; width: 0; height: 0; }
.app { height: 100vh; display: flex; flex-direction: column; }

/* top bar */
.topbar { flex: none; height: 27px; display: flex; align-items: center; background: #2b579a; color: #fff; font-size: 11px; white-space: nowrap; }
.tabs { display: flex; gap: 2px; align-self: flex-end; }
.tabs a { height: 26px; padding: 0 16px 0 15px; line-height: 26px; }
.tabs .file { padding: 0 22px 0 18px; }
.tabs .active { background: #f1f1f1; color: #1c6ac8; }
.tellme { display: flex; align-items: center; gap: 9px; margin-left: 21px; }
.tellme input { width: 190px; padding: 0; border: 0; background: none; font-size: 12px; color: #b9c7df; }
.tellme input::placeholder { color: #b9c7df; opacity: 1; }
.swirls { margin-left: auto; margin-right: -109px; align-self: flex-start; }
.version { margin-right: 8px; position: relative; }
.style-btn { display: flex; align-items: center; gap: 8px; margin-right: 3px; }

/* ribbon */
.ribbon { flex: none; height: 99px; display: flex; background: #f1f1f1; border-bottom: 1px solid #d4d4d4; }
.group { display: flex; flex-direction: column; margin: 3px 0; border-right: 1px solid #d4d4d4; }
.tools { flex: 1; display: flex; padding-top: 4px; }
.group h2 { font-size: 11px; line-height: 16px; padding-bottom: 3px; text-align: center; color: #666; white-space: nowrap; }
.g-view { width: 121px; }
.g-view .tools { padding-left: 8px; gap: 3px; }
.g-view .big { min-width: 46px; }
.g-dxf { width: 307px; }
.g-font { width: 181px; }
.g-kind { width: 181px; }
.g-typ { width: 103px; }
.g-typ .tools { justify-content: center; }
.g-ana { width: 596px; }
.big { display: flex; flex-direction: column; align-items: center; font-size: 12px; line-height: 15px; white-space: nowrap; }
.g-view .big { font-size: 11px; }
.big > svg { width: 32px; height: 32px; margin-bottom: 3px; }
.big span { display: flex; align-items: center; gap: 1px; min-height: 15px; }
.chev { width: 7px; height: 6px; }
.sep { width: 1px; height: 60px; margin-top: 3px; background: #d4d4d4; }
.stack { display: flex; flex-direction: column; gap: 9px; padding: 7px 4px 0 7px; }
.line { display: flex; align-items: center; height: 21px; justify-content: space-between; white-space: nowrap; font-size: 11px; }
.paper { width: 219px; padding: 7px 3px 0 8px; }
.g-dxf .big { width: 86px; }
.g-font .stack, .g-kind .stack { width: 100%; padding-left: 6px; }
.g-font .stack { padding-left: 7px; }
.g-kind .stack { padding-right: 8px; }
.combo { position: relative; display: flex; height: 21px; border: 1px solid #c6c6c6; background: #fff; }
.combo select { width: 100%; appearance: none; border: 0; padding: 0 1px; background: none; color: #222; outline: 0; }
.combo::after { content: ""; position: absolute; right: 4px; top: 8px; border: 3px solid transparent; border-top: 4px solid #777; border-bottom: 0; }
.paper .combo { width: 116px; }
.paper select { color: #000; }
.g-font .combo { width: 117px; }
.g-kind .combo { flex: 1; }
.g-kind select { color: #000; }
.spin { position: relative; width: 60px; height: 21px; border: 1px solid #b5b5b5; background: #e4e4e4; }
.spin input { width: 100%; height: 100%; border: 0; padding: 0 2px; background: none; }
.spin::before, .spin::after { content: ""; position: absolute; right: 6px; border: 3px solid transparent; }
.spin::before { top: 4px; border-bottom: 3px solid #555; border-top: 0; }
.spin::after { bottom: 4px; border-top: 3px solid #555; border-bottom: 0; }
.off, .off input { color: #aaa; }
.off .spin::before { border-bottom-color: #aaa; }
.off .spin::after { border-top-color: #aaa; }
.num { flex: 1; background: #fff; border-color: #c6c6c6; }
.num input { text-align: right; padding-right: 17px; }
.joined { justify-content: flex-start; }
.fmt { justify-content: flex-start; gap: 8px; font: 700 13px/16px "Liberation Serif", serif; color: #222; padding-left: 3px; }
.fmt button { min-width: 16px; }
.fmt .i { font-style: italic; }
.fmt .u { text-decoration: underline; }
.fmt .s { text-decoration: line-through; }
.kinds { padding: 0 3px; }
.plan { display: flex; align-items: center; gap: 5px; width: 76px; height: 60px; margin-left: 10px; font-size: 12px; margin-top: 2px; margin-right: -10px; }
input[type="checkbox"] { appearance: none; margin: 0; flex: none; width: 11px; height: 11px; border: 1px solid #b0b0b0; background: #fff; }
.w1 { width: 87px; } .w2 { width: 98px; } .w3 { width: 65px; } .w4 { width: 57px; } .w5 { width: 74px; } .w6 { width: 68px; }
.calc-digits { font: 700 7px "Open Sans", sans-serif; fill: #1f3c72; }
.clear-text { font: 700 7px "Open Sans", sans-serif; fill: #24406e; }

/* work area */
.work { flex: 1; min-height: 0; display: flex; }
.left { width: 303px; flex: none; display: flex; flex-direction: column; padding-right: 5px; border-right: 1px solid #c0c0c0; }
.pane { display: flex; flex-direction: column; }
.pane-head { display: flex; align-items: center; gap: 10px; height: 40px; padding: 1px 6px 0 2px; }
.pane-head h1, .r-head h1 { flex: 1; font-size: 20px; line-height: 28px; }
.bars { background: #eee; padding: 0 0 1px 7px; border-bottom: 1px solid #d4d4d4; }
.bar { display: flex; align-items: center; gap: 2px; height: 26px; }
.bar button { display: flex; align-items: center; justify-content: center; width: 20px; height: 19px; }
.bar svg { width: 16px; height: 16px; }
.bar .on { background: #cdcdcd; }
.bar .gap { width: 7px; }
.bar .gap.s { width: 1px; }
.bar .gap.m { width: 8px; }
.bar .drop { width: 9px; opacity: .5; }
.bar .mini { width: 5px; height: 3px; }
.level { width: 66px; margin: 0 1px 0 2px; font-size: 11px; }
.tree { list-style: none; background: #fff; padding-top: 1px; border-right: 1px solid #d4d4d4; font: 11px/17px Roboto, "Noto Sans", sans-serif; color: #333; white-space: nowrap; }
.tree li { display: flex; align-items: center; height: 17px; padding: 0 2px 0 5px; gap: 4px; }
.tree label, .tree a { display: flex; align-items: center; gap: 2px; flex: 1; height: 17px; padding-left: 3px; }
.tree .cur { background: #f0f0f0; }
.tree .exp { width: 7px; height: 9px; }
.tree .fold { width: 17px; height: 14px; }
.checks { height: 331px; color: #8a8a8a; padding-top: 2px; }
.tree input { margin-right: 4px; border-color: #c4c4c4; }
.tree input:checked { position: relative; }
.tree input:checked::after { content: ""; position: absolute; left: 3px; top: 0; width: 3px; height: 6px; border: solid #aaa; border-width: 0 2px 2px 0; transform: rotate(40deg); }
.b-t { font: 700 9px "Open Sans", sans-serif; fill: #000; }
.foot { height: 28px; padding: 0 0 4px 7px; background: #eee; border-top: 1px solid #d4d4d4; border-bottom: 1px solid #c4c4c4; }
.ico-t { font: 700 10px "Liberation Serif", serif; fill: #4a4ae0; }
.pane-tabs { display: flex; height: 22px; font-size: 11px; border-bottom: 1px solid #c4c4c4; }
.pane-tabs button { display: flex; align-items: center; gap: 4px; padding: 0 5px; }
.pane-tabs .sel { background: #fff; padding-left: 2px; border-right: 1px solid #a8a8a8; }
.nav-pane { flex: 1; }
.nav-pane .pane-head { height: 47px; padding-top: 8px; }
.nav-bar { height: 25px; padding: 0 0 1px 8px; background: #eee; border-bottom: 1px solid #d4d4d4; color: #9c9c9c; font-size: 11px; }
.nav-bar button { width: 30px; }
.nav-bar button:nth-child(2) { width: 34px; }
.nav-bar .tbl { width: 20px; }
.nav-bar .tbl svg { width: 18px; }
.vsep { width: 1px; height: 19px; margin: 0 2px 0 3px; background: #ccc; }
.num-t { font: 700 9px "Open Sans", sans-serif; fill: #c0504d; }
.nav-pane .tree { flex: 1; padding-top: 2px; }

.canvas { flex: 1; min-width: 0; display: flex; flex-direction: column; border-right: 1px solid #ddd; margin-right: 1px; }
.strip { height: 42px; display: flex; flex-direction: column; justify-content: space-around; align-items: flex-end; padding: 0 3px 3px 0; background: #f0f0f0; border-bottom: 4px solid #ddd; }
.sheet { flex: 1; overflow: hidden; background: #fff; border-top: 2px solid #7a7a7a; border-left: 2px solid #7a7a7a; }
.drawing path { fill: none; stroke-width: 1; shape-rendering: crispEdges; }
.mag path { stroke: #f0f; }
.red path { stroke: #f00; }
.green path { stroke: #0f0; }
.drawing .dots { stroke-dasharray: 1 5; }
.big-t { font: 34px "DejaVu Sans", sans-serif; fill: #f0f; stroke: #f0f; stroke-width: .6; }
.dim-t { font: 700 19px "Noto Sans", sans-serif; fill: #0f0; text-anchor: middle; }
.yel-t { font: 14px "DejaVu Sans", sans-serif; fill: #ff0; stroke: #ff0; stroke-width: .7; }
.tiny-t { font: 700 6px "DejaVu Sans", sans-serif; fill: #0f0; stroke: #0f0; stroke-width: .5; }

/* property panel */
.right { width: 365px; flex: none; display: flex; flex-direction: column; border-left: 1px solid #c0c0c0; padding-left: 6px; }
.r-head { display: flex; height: 46px; padding: 10px 7px 0 4px; align-items: flex-start; }
.grid-wrap { flex: none; height: 769px; display: flex; margin-left: 2px; background: #fff; }
.props { flex: 1; overflow: hidden; font: 11px/17px Roboto, "Noto Sans", sans-serif; color: #333; white-space: nowrap; }
.props h3 { position: relative; height: 17px; padding-left: 20px; background: #eee; font-size: 12px; line-height: 17px; font-weight: 700; color: #444; }
.props h3::before { content: ""; position: absolute; left: 6px; top: 5px; border-left: 6px solid transparent; border-bottom: 6px solid #a0a0a0; }
.props label { display: grid; grid-template-columns: 161px 1fr; height: 17px; border-left: 17px solid #eee; border-bottom: 1px solid #eee; }
.props label span { padding-left: 3px; border-right: 1px solid #eee; overflow: hidden; }
.props p { height: 4px; overflow: hidden; line-height: 13px; padding-left: 6px; font-size: 11px; }
.props input { position: relative; width: 26px; height: 11px; margin: 1px 0 0 3px; border: 1px solid #b4b4b4; border-radius: 6px; }
.props input::after { content: ""; position: absolute; left: 1px; top: 1px; width: 8px; height: 7px; border-radius: 4px; background: #a8a8a8; }
.props input:checked { background: #2b579a; border-color: #2b579a; }
.props input:checked::after { left: 15px; background: #fff; }
.scroll { width: 18px; padding: 17px 2px 0 0; display: flex; justify-content: flex-end; border-right: 1px solid #ddd; }
.scroll i { width: 2px; height: 647px; background: #a8a8a8; }
.info { flex: 1; margin: 4px 0 4px 2px; background: #eee; border-top: 1px solid #c0c0c0; border-right: 1px solid #ddd; }
.grip { height: 8px; display: flex; justify-content: center; align-items: center; background: #ccc; }
.grip i { width: 58px; height: 3px; background: repeating-linear-gradient(90deg, #a0a0a0 0 3px, #fff 3px 4px, #ccc 4px 6px); }
.dock { height: 23px; display: flex; justify-content: flex-end; padding-top: 1px; background: #eee; overflow: hidden; }
.dock button { width: 26px; height: 27px; flex: none; display: flex; justify-content: center; align-items: center; }
.dock svg { width: 16px; height: 16px; }
.dock .on { background: #cdcdcd; }
.wheel { width: 15px; height: 15px; border-radius: 50%; background: radial-gradient(#fff, transparent 60%), conic-gradient(#f80, #f0f, #00f, #0cf, #0c0, #ff0, #f80); }
```
